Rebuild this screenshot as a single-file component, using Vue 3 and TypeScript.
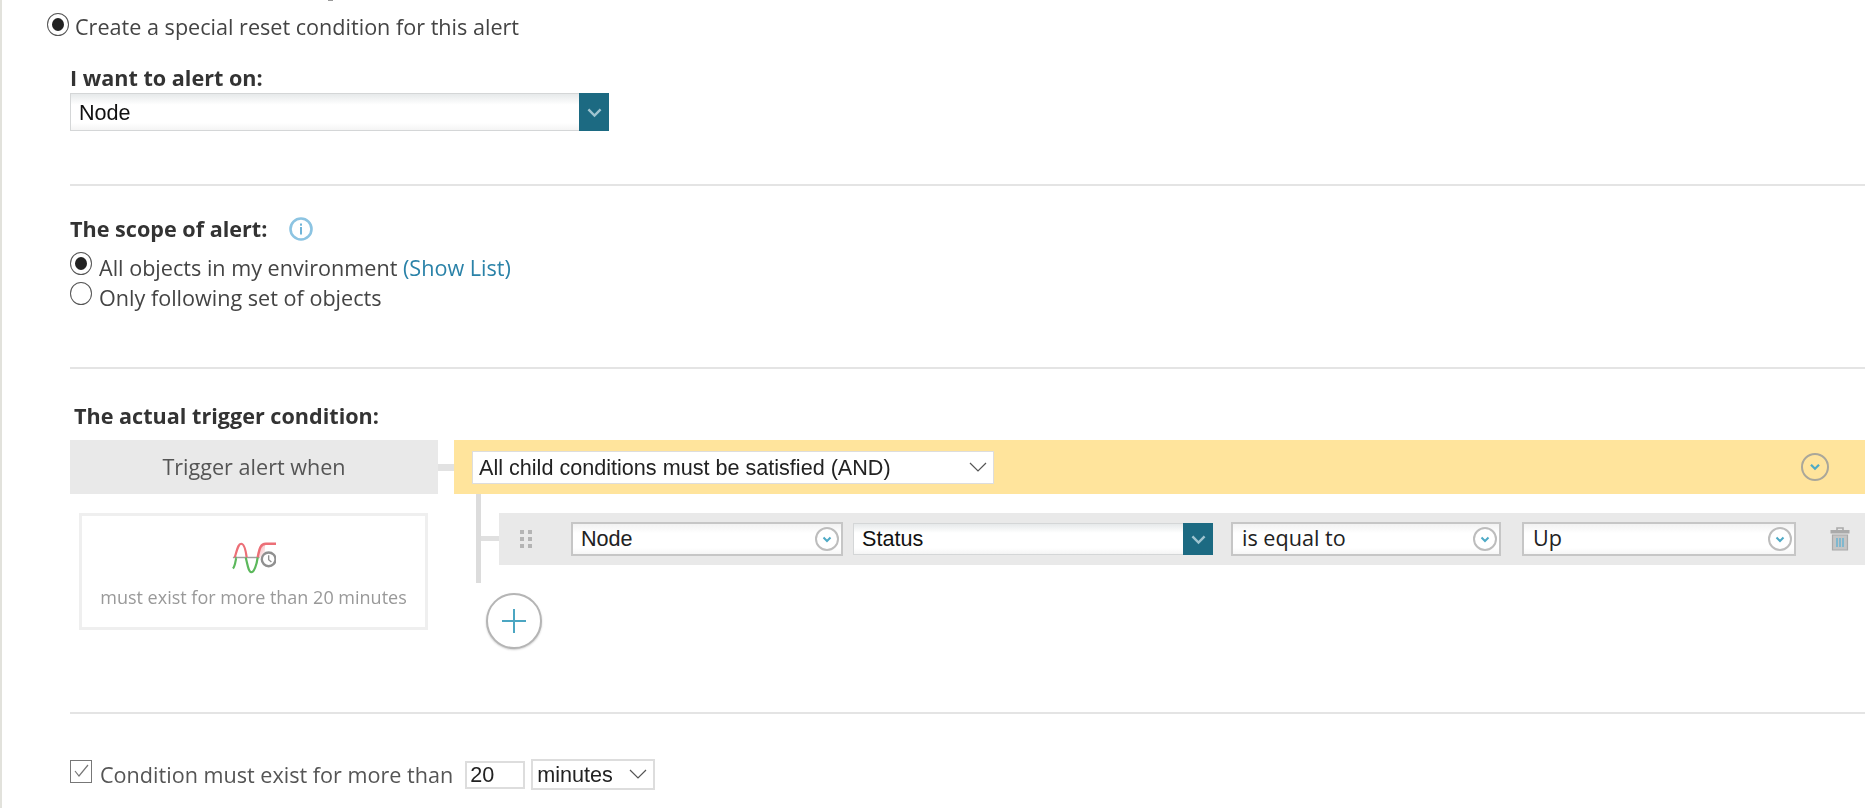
<script setup lang="ts">
const chevronPath: string = 'M1.5 1.5l3.5 3.5 3.5-3.5'
</script>

<template>
  <div class="page">
    <span class="clipmark"></span>
    <label class="radio-line top-radio">
      <span class="radio on"></span><span class="txt">Create a special reset condition for this alert</span>
    </label>

    <section class="sec">
      <div class="h h-alert">I want to alert on:</div>
      <div class="combo big">
        <span class="combo-val">Node</span>
        <span class="combo-btn"><svg width="17" height="11" viewBox="0 0 14 9"><path d="M2 2l5 5 5-5" fill="none" stroke="#9fc4d0" stroke-width="2"/></svg></span>
      </div>
    </section>

    <hr class="rule r1" />

    <section class="sec">
      <div class="h h-scope">The scope of alert:
        <svg class="info" width="26" height="26" viewBox="0 0 26 26"><circle cx="13" cy="13" r="10.5" fill="#fff" stroke="#8cc4e2" stroke-width="2.6"/><rect x="12" y="7.5" width="2" height="2.2" fill="#6fb4d8"/><rect x="12" y="11" width="2" height="7.5" fill="#6fb4d8"/></svg>
      </div>
      <label class="radio-line l1"><span class="radio on"></span><span class="txt">All objects in my environment <a class="link">(Show List)</a></span></label>
      <label class="radio-line l2"><span class="radio"></span><span class="txt">Only following set of objects</span></label>
    </section>

    <hr class="rule r2" />

    <section class="sec trig">
      <div class="h h-trigger">The actual trigger condition:</div>
      <div class="builder">
        <div class="left-col">
          <div class="when">Trigger alert when</div>
          <div class="must">
            <svg width="44" height="33" viewBox="0 0 48 36">
              <defs><linearGradient id="fade" x1="0" y1="0" x2="1" y2="1"><stop offset="0" stop-color="#f3a3a8"/><stop offset="1" stop-color="#fff"/></linearGradient></defs>
              <path d="M27 18C29 8 30 3 36 3V18Z" fill="url(#fade)"/>
              <path d="M1 18H30" stroke="#a0a0a0" stroke-width="1.6" fill="none"/>
              <path d="M3 18C6 8 7 3 10 3S15 10 16 18" stroke="#ec6f77" stroke-width="2.4" fill="none"/>
              <path d="M28 18C30 8 31 3 37 3H48" stroke="#ec6f77" stroke-width="2.6" fill="none"/>
              <path d="M1 30C4 27 4 18 5 18M15 18C17 26 18 34 21 34S27 26 28 18" stroke="#5cb85c" stroke-width="2.4" fill="none"/>
              <circle cx="40" cy="20" r="7.5" fill="#fff" stroke="#909090" stroke-width="2.6"/>
              <path d="M40 15.5V20.5L43 23" stroke="#909090" stroke-width="1.5" fill="none"/>
            </svg>
            <div class="must-txt">must exist for more than 20 minutes</div>
          </div>
        </div>
        <div class="link-h"></div>
        <div class="right-col">
          <div class="yellow">
            <div class="plain-select and"><span>All child conditions must be satisfied (AND)</span><svg width="18" height="11" viewBox="0 0 18 11"><path d="M1 1l8 8 8-8" fill="none" stroke="#555" stroke-width="1.2"/></svg></div>
            <span class="cchev lg"><svg width="12" height="8" viewBox="0 0 10 7"><path :d="chevronPath" fill="none" stroke="#4eaac6" stroke-width="2"/></svg></span>
          </div>
          <div class="tree">
            <div class="tree-line"><span class="tick"></span></div>
            <div class="cond">
              <span class="dots"><i></i><i></i><i></i><i></i><i></i><i></i></span>
              <div class="field f1"><span>Node</span><span class="cchev"><svg width="10" height="7" viewBox="0 0 10 7"><path :d="chevronPath" fill="none" stroke="#4eaac6" stroke-width="2"/></svg></span></div>
              <div class="combo status"><span class="combo-val">Status</span><span class="combo-btn"><svg width="17" height="11" viewBox="0 0 14 9"><path d="M2 2l5 5 5-5" fill="none" stroke="#9fc4d0" stroke-width="2"/></svg></span></div>
              <div class="field f3 os"><span>is equal to</span><span class="cchev"><svg width="10" height="7" viewBox="0 0 10 7"><path :d="chevronPath" fill="none" stroke="#4eaac6" stroke-width="2"/></svg></span></div>
              <div class="field f4 os"><span>Up</span><span class="cchev"><svg width="10" height="7" viewBox="0 0 10 7"><path :d="chevronPath" fill="none" stroke="#4eaac6" stroke-width="2"/></svg></span></div>
              <svg class="trash" width="22" height="26" viewBox="0 0 22 26"><path d="M8 4V2h6v2" fill="none" stroke="#aaa" stroke-width="1.6"/><rect x="1.5" y="4" width="19" height="3.5" fill="#aaa"/><path d="M3.5 9h15v15h-15z" fill="#c5c5c5" stroke="#aaa" stroke-width="1.2"/><path d="M8 12v9M11 12v9M14 12v9" stroke="#6fb4d0" stroke-width="1.6"/></svg>
            </div>
          </div>
          <button class="add"><svg width="28" height="28" viewBox="0 0 28 28"><path d="M14 2v24M2 14h24" stroke="#4ba6c2" stroke-width="2"/></svg></button>
        </div>
      </div>
    </section>

    <hr class="rule r3" />

    <div class="cond-line">
      <span class="check"><svg width="18" height="16" viewBox="0 0 18 16"><path d="M3 8l4 5 9-11" fill="none" stroke="#777" stroke-width="1.2"/></svg></span>
      <span class="txt">Condition must exist for more than</span>
      <span class="num">20</span>
      <div class="plain-select mins"><span>minutes</span><svg width="18" height="11" viewBox="0 0 18 11"><path d="M1 1l8 8 8-8" fill="none" stroke="#555" stroke-width="1.2"/></svg></div>
    </div>
  </div>
</template>

<style>
html, body { margin: 0; background: #fff; overflow: hidden; }
</style>

<style scoped>
.page {
  box-sizing: border-box;
  width: 1865px;
  height: 808px;
  overflow: hidden;
  border-left: 2px solid #e2e2dc;
  padding-left: 68px;
  font-family: "Open Sans", sans-serif;
  font-size: 21.6px;
  color: #444;
  position: relative;
  filter: blur(0.4px);
}
.clipmark { position: absolute; left: 326px; top: 0; width: 5px; height: 1px; background: #9a9a9a; }
.txt { white-space: nowrap; }
.radio-line { display: flex; align-items: flex-start; }
.radio {
  box-sizing: border-box;
  width: 22px; height: 23px;
  border-radius: 50%;
  border: 1.5px solid #555;
  background: #fff;
  display: flex; align-items: center; justify-content: center;
  flex: none;
}
.radio.on::after { content: ""; width: 12px; height: 13px; border-radius: 50%; background: #222; }
.top-radio { margin-left: -23px; padding-top: 13px; height: 32px; }
.top-radio .txt { margin: 0 0 0 6px; line-height: 27px; }
.h { font-weight: 700; color: #333; line-height: 27px; }
.h-alert { margin-top: 19px; }
.combo { display: flex; box-sizing: border-box; background: linear-gradient(#e6e9ea, #fff 30%, #fff 80%, #f4f4f4); border: 1px solid #d4d6d7; color: #111; align-items: stretch; font-family: "Liberation Sans", sans-serif; }
.combo.big { width: 539px; height: 38px; margin-top: 2px; }
.combo-val { flex: 1; padding-left: 8px; line-height: 37px; }
.combo-btn { width: 30px; margin: -1px; background: #1c6a82; display: flex; align-items: center; justify-content: center; }
.rule { border: 0; height: 2px; background: #e4e4e4; margin: 0; }
.r1 { margin-top: 53px; }
.h-scope { margin-top: 29px; display: flex; align-items: center; gap: 21px; }
.l1 { margin-top: 10px; height: 30px; }
.l2 { height: 30px; }
.l1 .txt, .l2 .txt { margin-left: 7px; margin-top: 2px; line-height: 27px; }
.link { color: #2a82a8; }
.r2 { margin-top: 55px; }
.h-trigger { margin: 33px 0 0 4px; height: 38px; }
.builder { display: flex; align-items: flex-start; }
.left-col { width: 368px; flex: none; }
.when { height: 54px; background: #e9e9e9; text-align: center; line-height: 54px; color: #555; }
.must {
  box-sizing: border-box; margin: 19px 10px 0 9px; height: 117px;
  border: 3px solid #efefef;
  display: flex; flex-direction: column; align-items: center; padding-top: 25px;
}
.must-txt { font-size: 18px; color: #999; line-height: 24px; margin-top: 11px; white-space: nowrap; }
.link-h { width: 16px; height: 7px; margin-top: 24px; background: #e2e2e2; flex: none; }
.right-col { flex: 1; min-width: 0; }
.yellow { height: 54px; background: #ffe49c; display: flex; align-items: center; justify-content: space-between; padding: 0 36px 0 18px; }
.plain-select {
  box-sizing: border-box; background: #fff; border: 1px solid #ddd;
  font-family: "Liberation Sans", sans-serif; color: #222;
  display: flex; align-items: center; justify-content: space-between;
}
.and { width: 522px; height: 33px; padding: 1px 6px 0 6px; }
.cchev {
  box-sizing: border-box; width: 24px; height: 24px; border-radius: 50%;
  border: 2px solid #bdbdbd; background: #fff;
  display: inline-flex; align-items: center; justify-content: center; flex: none;
}
.cchev.lg { width: 28px; height: 28px; border-color: #aaa79a; background: transparent; }
.tree { position: relative; padding: 19px 0 0 45px; height: 80px; }
.tree-line { position: absolute; left: 22px; top: 0; width: 5px; height: 89px; background: #dcdcdc; }
.tick { position: absolute; left: 5px; top: 42px; width: 18px; height: 5px; background: #e0e0e0; }
.cond { height: 52px; background: #e9e9e9; display: flex; align-items: center; position: relative; }
.dots { display: grid; grid-template-columns: 4px 4px; gap: 3px 4px; margin-left: 21px; width: 12px; margin-right: 39px; flex: none; }
.dots i { width: 4px; height: 4px; background: #b4b4b4; }
.field {
  box-sizing: border-box; height: 34px; background: linear-gradient(#f2f2f2, #fff 30%, #fff 80%, #f6f6f6);
  border: 2px solid #c6c6c6; display: flex; align-items: center; justify-content: space-between;
  padding: 0 2px 0 8px; color: #222; font-family: "Liberation Sans", sans-serif;
}
.field.os { font-family: "Open Sans", sans-serif; line-height: 28px; padding-left: 9px; }
.field.os > span:first-child { margin-top: -2px; }
.f1 { width: 272px; margin-right: 10px; }
.combo.status { width: 360px; height: 32px; margin-right: 18px; }
.status .combo-val { line-height: 30px; }
.f3 { width: 270px; margin-right: 21px; }
.f4 { width: 274px; }
.trash { margin-left: 33px; }
.add {
  box-sizing: border-box; display: flex; align-items: center; justify-content: center;
  width: 56px; height: 56px; border-radius: 50%; border: 2px solid #b5b5b5; background: #fff;
  padding: 0; margin: 0 0 0 32px; box-shadow: 0 1px 2px #ccc;
}
.r3 { margin-top: 63px; }
.cond-line { margin-top: 45px; display: flex; align-items: center; height: 31px; }
.check { box-sizing: border-box; width: 22px; height: 23px; border: 1.5px solid #777; display: flex; align-items: center; justify-content: center; margin-top: -7px; background: #fff; }
.cond-line .txt { margin-left: 8px; color: #555; }
.num { box-sizing: border-box; margin-left: 12px; width: 60px; height: 28px; border: 2px solid #ddd; font-family: "Liberation Sans", sans-serif; color: #222; padding-left: 3px; line-height: 24px; }
.mins { margin-left: 6px; width: 124px; height: 31px; border-width: 2px; padding: 0 6px 0 4px; }
</style>
